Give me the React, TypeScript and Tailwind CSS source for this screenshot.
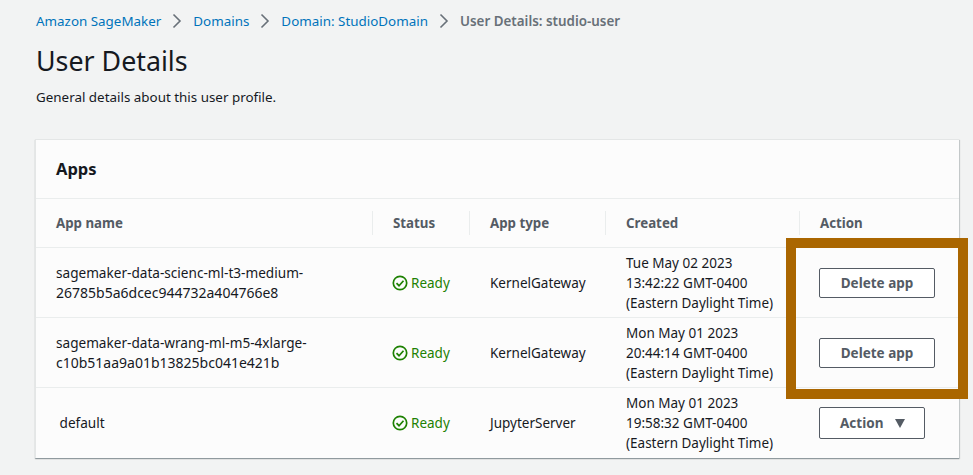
const columns = [
  { label: 'App name', width: 'w-[336px]' },
  { label: 'Status', width: 'w-[97px]' },
  { label: 'App type', width: 'w-[136px]' },
  { label: 'Created', width: 'w-[194px]' },
  { label: 'Action', width: 'w-[160px]' },
]

const rows = [
  {
    name: ['sagemaker-data-scienc-ml-t3-medium-', '26785b5a6dcec944732a404766e8'],
    type: 'KernelGateway',
    created: ['Tue May 02 2023', '13:42:22 GMT-0400', '(Eastern Daylight Time)'],
    action: 'Delete app',
  },
  {
    name: ['sagemaker-data-wrang-ml-m5-4xlarge-', 'c10b51aa9a01b13825bc041e421b'],
    type: 'KernelGateway',
    created: ['Mon May 01 2023', '20:44:14 GMT-0400', '(Eastern Daylight Time)'],
    action: 'Delete app',
  },
  {
    name: ['\u00a0default'],
    type: 'JupyterServer',
    created: ['Mon May 01 2023', '19:58:32 GMT-0400', '(Eastern Daylight Time)'],
    action: 'Action',
  },
]

function Chevron() {
  return (
    <svg width="16" height="16" viewBox="0 0 16 16" fill="none" stroke="#687078" strokeWidth="1.6" className="mx-[8px]">
      <path d="M4.5 1.5 11 8l-6.500 6.500" />
    </svg>
  )
}

function ReadyIcon() {
  return (
    <svg width="16" height="16" viewBox="0 0 16 16" fill="none" stroke="currentColor" strokeWidth="1.7">
      <circle cx="8" cy="8" r="6.700" />
      <path d="M4.500 8.200 7 10.700l4.500-5" />
    </svg>
  )
}

export default function App() {
  return (
    <div className="relative h-[475px] w-[973px] overflow-hidden bg-[#f2f3f3] pl-[36px] font-['Noto_Sans',sans-serif] text-[#16191f]">
      <nav className="flex h-[41px] items-center pt-[1px] text-[13.4px]">
        <a className="text-[#0073bb]">Amazon SageMaker</a>
        <Chevron />
        <a className="text-[#0073bb]">Domains</a>
        <Chevron />
        <a className="text-[#0073bb]">Domain: StudioDomain</a>
        <Chevron />
        <span className="font-semibold text-[#687078]">User Details: studio-user</span>
      </nav>
      <h1 className="text-[26.8px] leading-[40px]">User Details</h1>
      <p className="mt-[6px] text-[13.4px] leading-[20px]">General details about this user profile.</p>

      <div className="-ml-px mt-[32px] w-[924px] border-l border-t border-[#e4e6e6] bg-[#fcfcfc] shadow-[0_1px_1px_0_rgba(0,28,36,0.3),1px_1px_1px_0_rgba(0,28,36,0.15)]">
        <div className="flex h-[59px] items-center border-b border-[#eaeded] pl-[20px] text-[16.500px] font-bold">Apps</div>
        <div className="flex h-[49px] items-center border-b border-[#eaeded] text-[13.3px] font-bold text-[#545b64]">
          {columns.map((c, i) => (
            <div key={c.label} className={`${c.width} h-[24px] shrink-0 pl-[20px] leading-[24px] ${i > 0 ? 'border-l border-[#eaeded]' : ''}`}>
              {c.label}
            </div>
          ))}
        </div>
        {rows.map((r, i) => (
          <div key={i} className={`flex h-[70px] items-center text-[13.5px] leading-[20px] ${i < 2 ? 'border-b border-[#eaeded]' : ''}`}>
            <div className="w-[336px] shrink-0 pl-[20px]">
              {r.name.map((l, j) => (
                <div key={l} className={j === 0 ? 'text-[13.6px]' : 'text-[14px]'}>{l}</div>
              ))}
            </div>
            <div className="flex w-[97px] shrink-0 items-center gap-[3px] pl-[20px] text-[#1d8102]">
              <ReadyIcon />
              Ready
            </div>
            <div className="w-[136px] shrink-0 pl-[21px]">{r.type}</div>
            <div className="w-[194px] shrink-0 pl-[21px]">
              {r.created.map((l) => (
                <div key={l} className="whitespace-nowrap">{l}</div>
              ))}
            </div>
            <div className="shrink-0 pl-[20px]">
              {r.action === 'Action' ? (
                <button className="flex h-[32px] w-[106px] items-center gap-[11px] rounded-[2px] border border-[#545b64] bg-white pl-[20px] font-bold text-[#545b64]">
                  Action
                  <svg width="12" height="9" viewBox="0 0 12 9" fill="#545b64"><path d="M1 0h10L6 9z" /></svg>
                </button>
              ) : (
                <button className="h-[30px] w-[116px] rounded-[2px] border border-[#545b64] bg-white font-bold text-[#545b64]">
                  {r.action}
                </button>
              )}
            </div>
          </div>
        ))}
      </div>

      <div className="absolute left-[786px] top-[238px] h-[161px] w-[182px] border-[10px] border-[#aa6600]" />
    </div>
  )
}
